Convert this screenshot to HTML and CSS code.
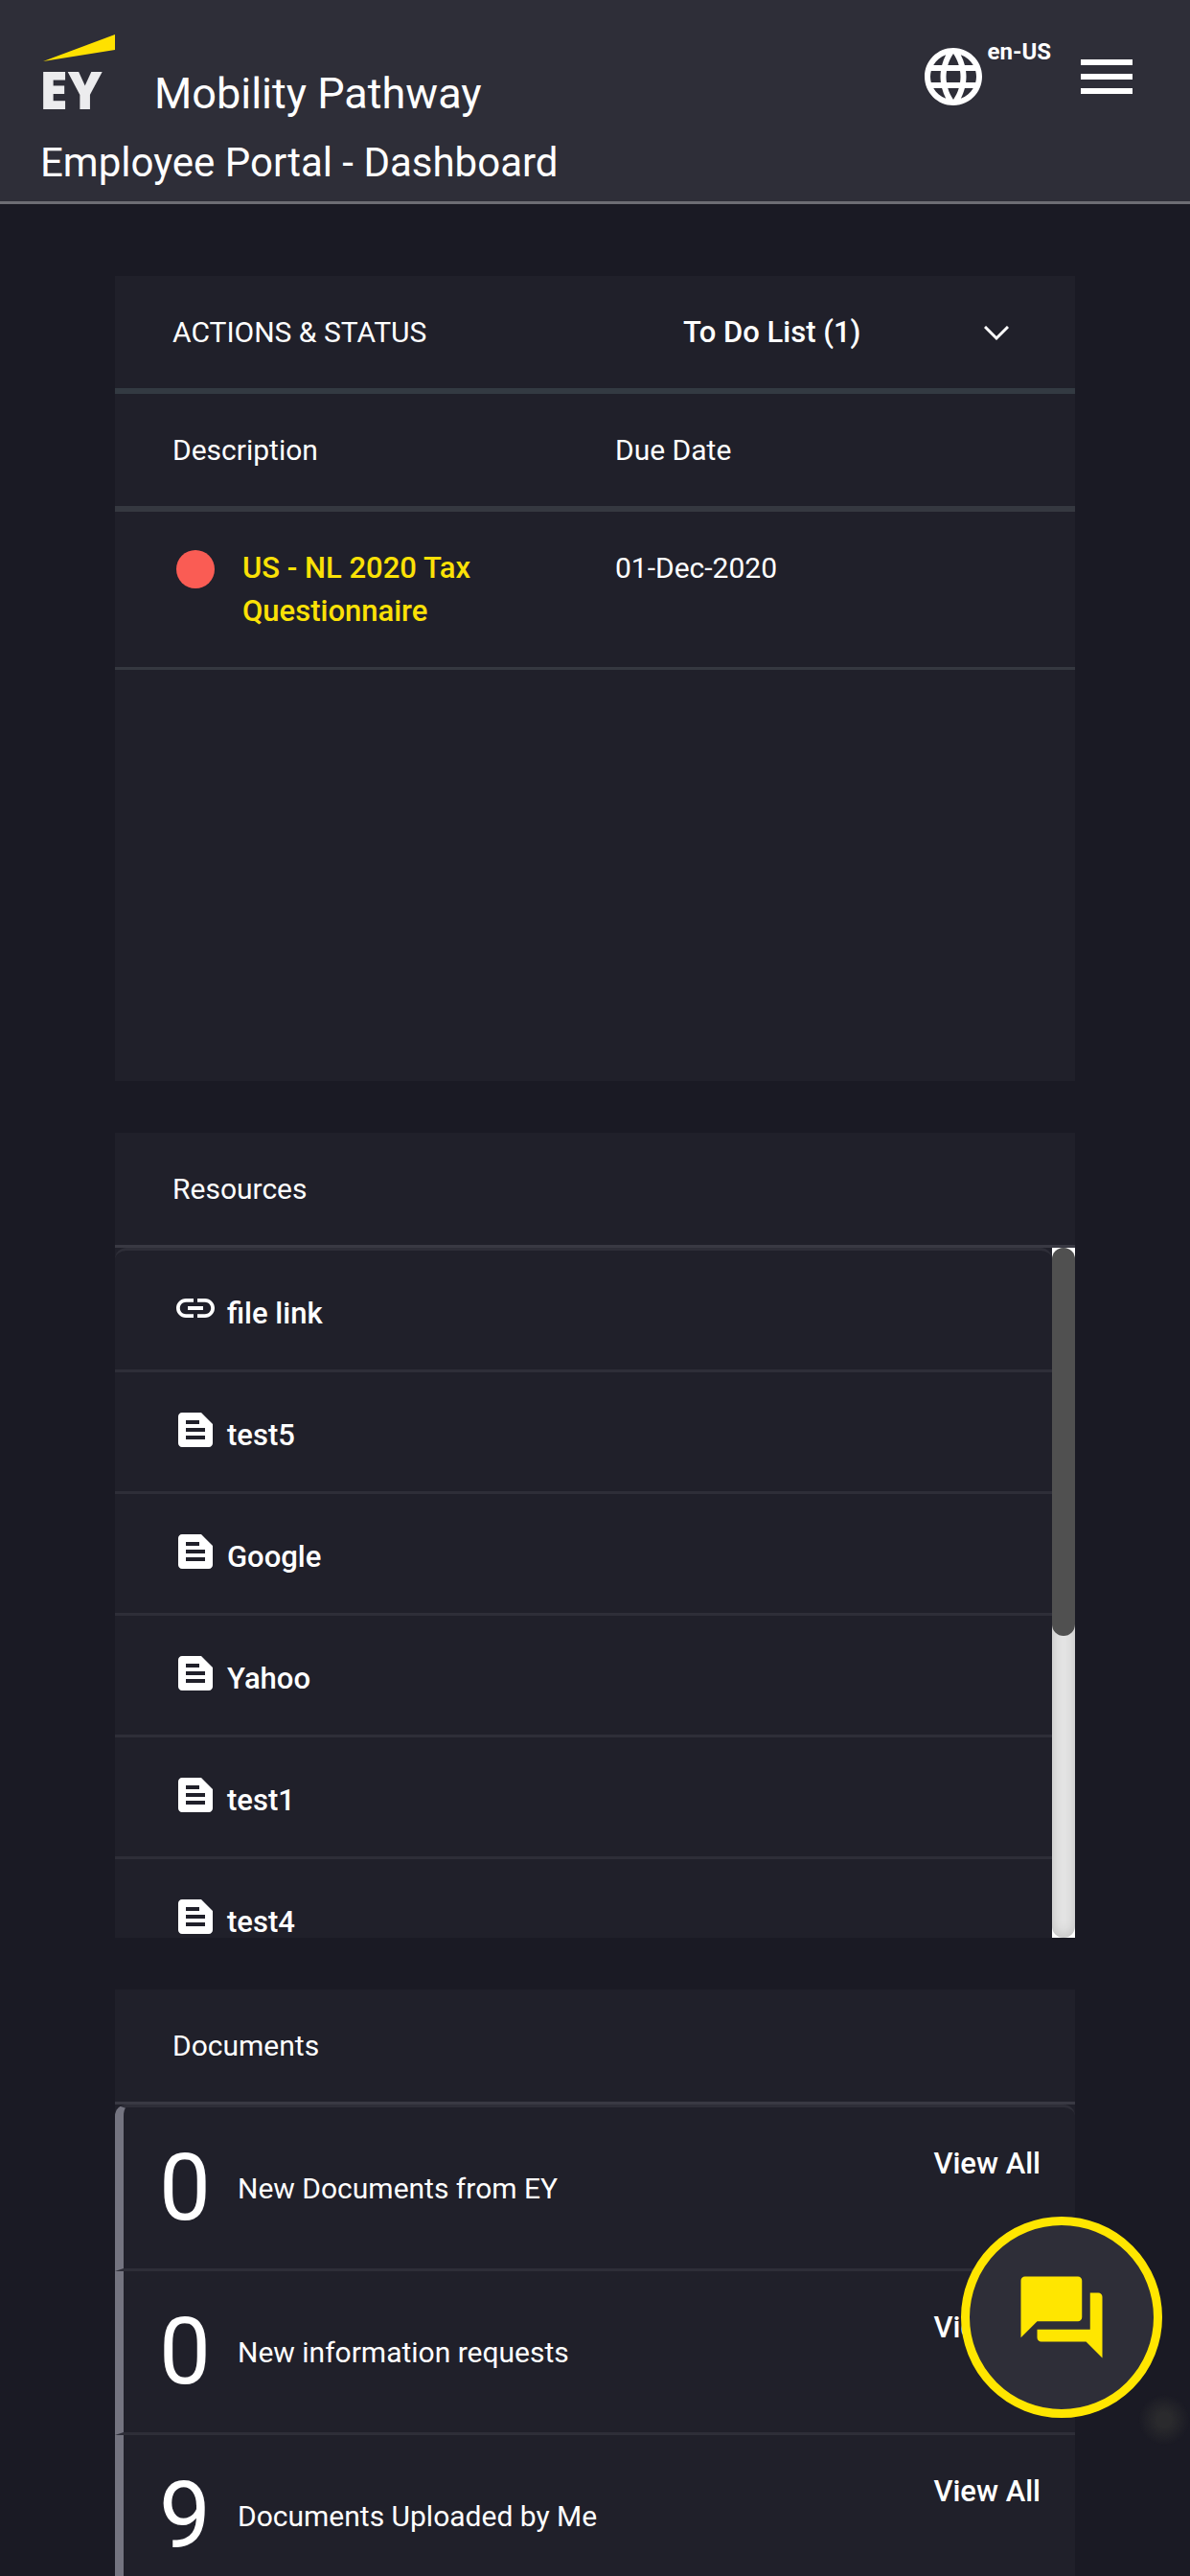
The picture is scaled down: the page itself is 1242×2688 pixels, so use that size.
FILE: index.html
```html
<!DOCTYPE html>
<html lang="en-US">
<head>
    <meta charset="UTF-8">
    <meta name="viewport" content="width=device-width, initial-scale=1.0">
    <title>Mobility Pathway</title>
    <link rel="stylesheet" href="styles.css">
</head>
<body>

<!-- Icons shared by the resource list -->
<svg class="icon-defs" aria-hidden="true">
    <symbol id="icon-link" viewBox="0 0 24 24">
        <path d="M3.900 12c0-1.710 1.390-3.100 3.100-3.100h4V7H7c-2.760 0-5 2.240-5 5s2.240 5 5 5h4v-1.900H7c-1.710 0-3.100-1.390-3.100-3.100zM8 13h8v-2H8v2zm9-6h-4v1.900h4c1.710 0 3.100 1.390 3.100 3.100s-1.390 3.100-3.100 3.100h-4V17h4c2.760 0 5-2.240 5-5s-2.240-5-5-5z"/>
    </symbol>
    <symbol id="icon-file" viewBox="0 0 24 24">
        <path fill-rule="evenodd" d="M5 3h10l6 6v10c0 1.100-.9 2-2 2H5c-1.100 0-2-.9-2-2V5c0-1.100.9-2 2-2zM7 7v2h7V7zm0 4v2h10v-2zm0 4v2h10v-2z"/>
    </symbol>
</svg>

<header class="header">
    <div class="header-left">
        <div class="brand">
            <svg class="logo" viewBox="0 0 78 80" role="img" aria-label="EY">
                <path class="logo-beam" d="M0 28L75 0v16z"/>
                <text class="logo-text" x="-4" y="78">EY</text>
            </svg>
            <span class="brand-name">Mobility Pathway</span>
        </div>
        <h1 class="page-title">Employee Portal - Dashboard</h1>
    </div>
    <div class="header-right">
        <button type="button" class="language-button">
            <svg class="header-icon" viewBox="0 0 24 24" aria-hidden="true">
                <path d="M11.990 2C6.470 2 2 6.480 2 12s4.470 10 9.990 10C17.520 22 22 17.520 22 12S17.520 2 11.990 2zm6.930 6h-2.950c-.32-1.250-.78-2.450-1.380-3.560 1.840.63 3.370 1.910 4.330 3.560zM12 4.040c.83 1.200 1.480 2.530 1.910 3.960h-3.820c.43-1.430 1.080-2.760 1.910-3.960zM4.260 14C4.100 13.360 4 12.690 4 12s.1-1.360.26-2h3.380c-.08.660-.14 1.320-.14 2s.06 1.340.14 2H4.260zm.82 2h2.950c.32 1.250.78 2.450 1.380 3.560-1.840-.63-3.370-1.900-4.330-3.560zm2.950-8H5.080c.96-1.660 2.490-2.930 4.330-3.560C8.810 5.550 8.350 6.750 8.030 8zM12 19.960c-.83-1.200-1.480-2.530-1.910-3.960h3.820c-.43 1.430-1.080 2.760-1.910 3.960zM14.340 14H9.660c-.09-.66-.16-1.320-.16-2s.07-1.350.16-2h4.680c.09.650.16 1.320.16 2s-.07 1.340-.16 2zm.25 5.560c.6-1.110 1.060-2.310 1.380-3.560h2.950c-.96 1.650-2.490 2.930-4.330 3.560zM16.360 14c.08-.66.14-1.320.14-2s-.06-1.340-.14-2h3.380c.16.640.26 1.310.26 2s-.1 1.360-.26 2h-3.380z"/>
            </svg>
            <span class="language-code">en-US</span>
        </button>
        <button type="button" class="menu-button" aria-label="Menu">
            <svg class="header-icon" viewBox="0 0 24 24" aria-hidden="true">
                <path d="M3 18h18v-2H3v2zm0-5h18v-2H3v2zm0-7v2h18V6H3z"/>
            </svg>
        </button>
    </div>
</header>

<main class="dashboard">

    <!-- Actions & Status -->
    <section class="card actions-card">
        <div class="card-header">
            <h2 id="actionsTitle">ACTIONS &amp; STATUS</h2>
            <div class="list-select">
                <select aria-labelledby="actionsTitle">
                    <option>To Do List (1)</option>
                </select>
                <svg class="chevron" viewBox="0 0 26 16" aria-hidden="true">
                    <path d="M1 1l12 12L25 1"/>
                </svg>
            </div>
        </div>
        <table class="actions-table">
            <thead>
                <tr>
                    <th>Description</th>
                    <th>Due Date</th>
                </tr>
            </thead>
            <tbody>
                <tr>
                    <td>
                        <div class="task">
                            <span class="status-dot"></span>
                            <a href="#">US - NL 2020 Tax Questionnaire</a>
                        </div>
                    </td>
                    <td>01-Dec-2020</td>
                </tr>
            </tbody>
        </table>
    </section>

    <!-- Resources -->
    <section class="card">
        <div class="card-header">
            <h2>Resources</h2>
        </div>
        <div class="resource-body">
            <ul class="resource-list">
                <li><a href="#"><svg><use href="#icon-link"/></svg><span>file link</span></a></li>
                <li><a href="#"><svg><use href="#icon-file"/></svg><span>test5</span></a></li>
                <li><a href="#"><svg><use href="#icon-file"/></svg><span>Google</span></a></li>
                <li><a href="#"><svg><use href="#icon-file"/></svg><span>Yahoo</span></a></li>
                <li><a href="#"><svg><use href="#icon-file"/></svg><span>test1</span></a></li>
                <li><a href="#"><svg><use href="#icon-file"/></svg><span>test4</span></a></li>
            </ul>
            <div class="scroll-bar">
                <div class="scroll-track">
                    <div class="scroll-thumb"></div>
                </div>
            </div>
        </div>
    </section>

    <!-- Documents -->
    <section class="card">
        <div class="card-header">
            <h2>Documents</h2>
        </div>
        <ul class="document-list">
            <li>
                <span class="count">0</span>
                <span class="document-label">New Documents from EY</span>
                <a href="#">View All</a>
            </li>
            <li>
                <span class="count">0</span>
                <span class="document-label">New information requests</span>
                <a href="#">View All</a>
            </li>
            <li>
                <span class="count">9</span>
                <span class="document-label">Documents Uploaded by Me</span>
                <a href="#">View All</a>
            </li>
        </ul>
    </section>

</main>

<div class="chat-glow"></div>
<button type="button" class="chat-button" aria-label="Chat">
    <svg viewBox="0 0 24 24" aria-hidden="true">
        <path d="M22 6h-3v9H6v2c0 .55.45 1 1 1h11l4 4V7c0-.55-.45-1-1-1zm-5 6V3c0-.55-.45-1-1-1H3c-.55 0-1 .45-1 1v14l4-4h10c.55 0 1-.45 1-1z"/>
    </svg>
</button>

</body>
</html>
```

FILE: styles.css
```css
* {
    box-sizing: border-box;
}
body {
    margin: 0;
    background-color: #1a1a24;
    color: #fff;
    font-family: Roboto, "Liberation Sans", sans-serif;
    font-size: 30px;
    line-height: 45px;
}
a {
    color: #fff;
    font-size: 31px;
    font-weight: 500;
    text-decoration: none;
}
button {
    padding: 0;
    border: none;
    background: none;
    color: #fff;
    font-family: inherit;
    cursor: pointer;
}
svg {
    display: block;
    flex: none;
    fill: currentColor;
}
ul {
    margin: 0;
    padding: 0;
    list-style: none;
}
.icon-defs {
    position: absolute;
    width: 0;
    height: 0;
}

/* Header */
.header {
    display: flex;
    justify-content: space-between;
    padding: 36px 51px 10px 42px;
    background-color: #2e2e38;
    border-bottom: 3px solid #6d6d74;
}
.brand {
    display: flex;
    align-items: flex-end;
    gap: 38px;
    padding-left: 3px;
}
.logo {
    width: 78px;
    height: 80px;
    overflow: visible;
}
.logo-beam {
    fill: #ffe100;
}
.logo-text {
    fill: #ececee;
    font-family: "Open Sans", sans-serif;
    font-size: 54px;
    font-weight: 800;
}
.brand-name {
    font-size: 45px;
    line-height: 36px;
}
.page-title {
    margin: 24px 0 0;
    font-size: 42px;
    font-weight: 400;
    line-height: 60px;
}
.header-right {
    display: flex;
    align-items: flex-start;
    gap: 22px;
    padding-top: 8px;
}
.language-button {
    display: flex;
    align-items: flex-start;
}
.language-code {
    font-size: 24px;
    font-weight: 700;
    line-height: 20px;
}
.header-icon {
    width: 72px;
    height: 72px;
}

/* Cards */
.dashboard {
    display: flex;
    flex-direction: column;
    gap: 54px;
    padding: 75px 120px 0;
}
.card {
    background-color: #20202a;
}
.card-header {
    display: flex;
    align-items: center;
    height: 120px;
    padding: 0 60px;
    border-bottom: 3px solid #393943;
}
.card-header h2 {
    flex: 1;
    margin: 0;
    font-size: 30px;
    font-weight: 400;
}

/* Actions & Status */
.actions-card {
    min-height: 840px;
}
.actions-card .card-header {
    height: 123px;
    border-bottom: 6px solid #333a42;
}
.list-select {
    position: relative;
    width: 362px;
}
.list-select select {
    display: block;
    width: 100%;
    height: 45px;
    padding: 0 13px;
    border: none;
    background: none;
    color: #fff;
    font-family: inherit;
    font-size: 31px;
    font-weight: 500;
    appearance: none;
}
.chevron {
    position: absolute;
    top: 16px;
    right: 9px;
    width: 26px;
    height: 16px;
    fill: none;
    stroke: #fff;
    stroke-width: 3;
    pointer-events: none;
}
.actions-table {
    width: 100%;
    border-collapse: separate;
    border-spacing: 0;
    table-layout: fixed;
}
.actions-table th {
    height: 123px;
    padding: 0 60px;
    border-bottom: 6px solid #353840;
    font-weight: 400;
    text-align: left;
}
.actions-table td {
    height: 165px;
    padding: 36px 60px;
    border-bottom: 3px solid #353840;
    vertical-align: top;
}
.actions-table th + th,
.actions-table td + td {
    padding-left: 21px;
}
.task {
    display: flex;
    gap: 29px;
    padding-left: 4px;
}
.task a {
    color: #fbe106;
}
.status-dot {
    flex: none;
    width: 40px;
    height: 40px;
    margin-top: 4px;
    border-radius: 50%;
    background-color: #fa5c54;
}

/* Resources */
.resource-body {
    display: flex;
    height: 720px;
}
.resource-list {
    flex: 1;
    overflow: hidden;
}
.resource-list li {
    height: 127px;
    padding: 36px 60px 0;
    border-bottom: 3px solid #2e2e38;
}
.resource-list li:first-child {
    height: 130px;
    border-top: 3px solid #2e2e38;
    border-radius: 12px 12px 0 0;
}
.resource-list a {
    display: flex;
    gap: 9px;
}
.resource-list svg {
    width: 48px;
    height: 48px;
}
.resource-list span {
    padding-top: 17px;
    line-height: 26px;
}
.scroll-bar {
    width: 24px;
    background-color: #fff;
}
.scroll-track {
    height: 100%;
    border-radius: 12px;
    background-color: #e8e8e8;
    box-shadow: inset 0 0 15px rgba(0, 0, 0, 0.2);
}
.scroll-thumb {
    height: 405px;
    border-radius: 12px;
    background-color: #505050;
}

/* Documents */
.document-list li {
    display: flex;
    align-items: center;
    height: 171px;
    padding: 0 36px 0 37px;
    border-bottom: 3px solid #2e2e38;
    border-left: 9px solid #747480;
}
.document-list li:first-child {
    height: 174px;
    border-top: 3px solid #2e2e38;
    border-radius: 12px 12px 0 0;
}
.count {
    width: 82px;
    font-size: 96px;
    line-height: 96px;
}
.document-label {
    flex: 1;
}
.document-list a {
    align-self: flex-start;
    margin-top: 36px;
}

/* Chat */
.chat-button {
    position: fixed;
    right: 29px;
    bottom: 165px;
    display: flex;
    align-items: center;
    justify-content: center;
    width: 210px;
    height: 210px;
    border: 9px solid #ffe600;
    border-radius: 50%;
    background-color: #2e2e38;
    color: #ffe600;
}
.chat-button svg {
    width: 102px;
    height: 102px;
}
.chat-glow {
    position: fixed;
    right: 0;
    bottom: 136px;
    width: 54px;
    height: 54px;
    background: radial-gradient(circle, #2a2a2d 20%, rgba(42, 42, 45, 0) 70%);
}
```
